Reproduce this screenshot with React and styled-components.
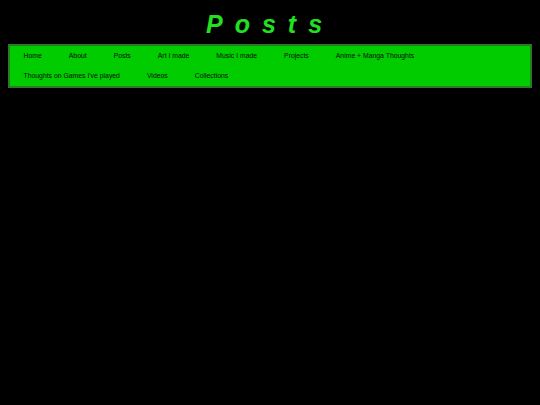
import React from "react";
import styled, { createGlobalStyle } from "styled-components";

const GlobalStyle = createGlobalStyle`
  html, body {
    background: #000;
  }
  body {
    margin: 8px;
    font-family: "Liberation Sans", Arial, sans-serif;
  }
`;

const Title = styled.h1`
  margin: 0 0 4px;
  text-align: center;
  font-size: 25px;
  line-height: 32px;
  font-weight: bold;
  font-style: italic;
  letter-spacing: 12px;
  color: #22e022;
`;

const NavBar = styled.nav`
  background: #00cc00;
  border: 2px solid #2a7a2a;
  display: flex;
  flex-wrap: wrap;
`;

const NavLink = styled.a`
  display: inline-block;
  padding: 0 13.5px;
  line-height: 20px;
  font-size: 6.85px;
  color: #0a0a0a;
  text-decoration: none;
  white-space: nowrap;
`;

const links = [
  "Home",
  "About",
  "Posts",
  "Art I made",
  "Music I made",
  "Projects",
  "Anime + Manga Thoughts",
  "Thoughts on Games I've played",
  "Videos",
  "Collections",
];

const App = () => {
  return (
    <>
      <GlobalStyle />
      <Title>Posts</Title>
      <NavBar>
        {links.map((l) => (
          <NavLink key={l} href="#">
            {l}
          </NavLink>
        ))}
      </NavBar>
    </>
  );
};

export default App;
